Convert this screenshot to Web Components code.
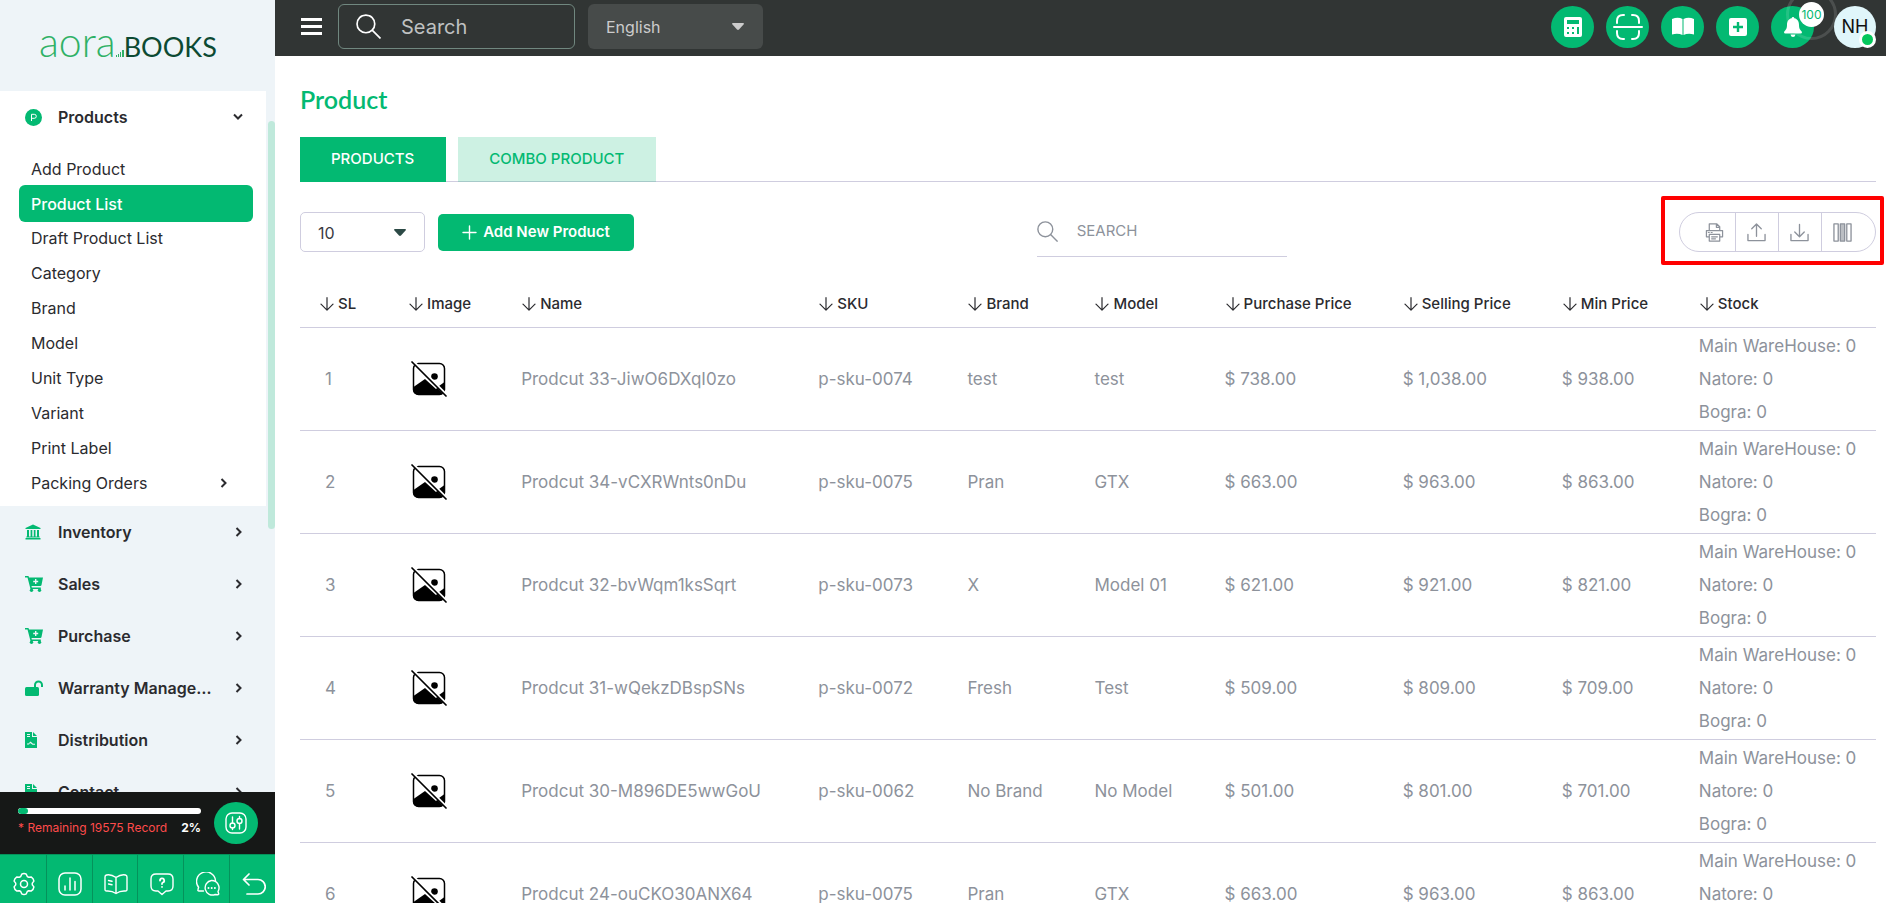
<!DOCTYPE html>
<html lang="en">
<head>
<meta charset="utf-8">
<meta name="viewport" content="width=device-width, initial-scale=1">
<title>Aorabooks - Product</title>
<style>
  html, body { margin: 0; height: 100%; }
  body { font: 16px/24px Inter, "Liberation Sans", sans-serif; color: #2b2b2f; background: #fff;
    --green: #03b972; --line: #cfcddf; --muted: #8d929b; --dark: #313534; }
</style>
</head>
<body>
<app-shell></app-shell>
<script>
const RESET = `*{box-sizing:border-box} button,input,select{font:inherit;color:inherit;margin:0;padding:0;border:0;background:none;border-radius:0;outline:0} button{cursor:pointer} a{color:inherit;text-decoration:none}`;

function define(name, css, html) {
  customElements.define(name, class extends HTMLElement {
    constructor() {
      super();
      const root = this.attachShadow({ mode: 'open' });
      const body = typeof html === 'function' ? html(this) : html;
      root.innerHTML = `<style>${RESET}${css}</style>${body}`;
    }
  });
}

/* Icon paths: [viewBox, markup] */
const S = 'fill="none" stroke="currentColor" stroke-linecap="round" stroke-linejoin="round"';
const ICONS = {
  search: ['0 0 24 24', `<g fill="none" stroke="currentColor" stroke-width="1.6"><circle cx="9.5" cy="9.5" r="8.5"/><path d="M15.5 15.5l8 8"/></g>`],
  burger: ['0 0 21 17', `<path fill="currentColor" d="M0 0h21v3H0zM0 7h21v3H0zM0 14h21v3H0z"/>`],
  caret: ['0 0 12 7', `<path fill="currentColor" d="M0 1q0-1 1-1h10q1 0 1 1L7 6.500Q6 7.300 5 6.500z"/>`],
  chev: ['0 0 10 10', `<path fill="none" stroke="currentColor" stroke-width="2" d="M2.500 1l4 4-4 4"/>`],
  calc: ['0 0 18 20', `<path fill="currentColor" fill-rule="evenodd" d="M2 0h14q2 0 2 2v16q0 2-2 2H2q-2 0-2-2V2q0-2 2-2zM3 3v4h12V3zM3 10v2h2v-2zM8 10v2h2v-2zM3 15v2h2v-2zM8 15v2h2v-2zM13 10v7h2v-7z"/>`],
  scan: ['0 0 30 26', `<g ${S} stroke-width="2"><path d="M4 9V7q0-6 6-6h1M19 1h1q6 0 6 6v2M4 17v2q0 6 6 6h1M19 25h1q6 0 6-6v-2M1 13h28"/></g>`],
  book: ['0 0 24 20', `<path fill="currentColor" d="M1 2q6-2.500 10.500 0v16Q7 16 1 17.500zM12.500 2q5-2.500 10.500 0v15.500q-6-1.500-10.500.500z"/>`],
  plusbox: ['0 0 18 18', `<path fill="currentColor" fill-rule="evenodd" d="M2 0h14q2 0 2 2v14q0 2-2 2H2q-2 0-2-2V2q0-2 2-2zM7.800 4v3.800H4v2.400h3.800V14h2.400v-3.800H14V7.800h-3.800V4z"/>`],
  bell: ['0 0 18 20', `<path fill="currentColor" d="M9 0q1.300 0 1.300 1.300C14 2 15 5 15 8c0 4 1.500 5 2.700 6.500q.8 2-1 2H1.300q-1.800 0-1-2C1.500 13 3 12 3 8c0-3 1-6 4.700-6.700Q7.700 0 9 0zM6.500 17.500h5q-.5 2.500-2.500 2.500t-2.500-2.500z"/>`],
  plus: ['0 0 15 15', `<path ${S} stroke-width="1.400" d="M7.500 1v13M1 7.500h13"/>`],
  arrow: ['0 0 14 14', `<path ${S} stroke-width="1.200" d="M7 .7v12.300M1 7.200l6 6 6-6"/>`],
  print: ['0 0 20 20', `<g ${S} stroke-width="1.300"><path d="M4.500 8V1h8l3 3v4M12 1v3.500h3.500M4 14.500H1.500V8h17v6.500H16M4.500 12h11v7h-11zM7 14.500h6M7 16.700h4M3.500 10h1M6.500 10h1"/></g>`],
  upload: ['0 0 20 20', `<g ${S} stroke-width="1.400"><path d="M10 14V1.500M5 6l5-5 5 5M1 12v6.500h18V12"/></g>`],
  download: ['0 0 20 20', `<g ${S} stroke-width="1.400"><path d="M10 1.500V14M5 9.500l5 5 5-5M1 12v6.500h18V12"/></g>`],
  columns: ['0 0 20 20', `<g ${S} stroke-width="1.400"><path d="M1 1h4.500v18H1zM14.500 1H19v18h-4.500z"/><path fill="currentColor" fill-opacity=".6" d="M7.700 1h4.600v18H7.700z"/></g>`],
  noimage: ['0 0 36 36', `<rect x="2.500" y="2.500" width="31" height="31" rx="5" fill="none" stroke="#000" stroke-width="1.500"/><circle cx="23.500" cy="15.500" r="3.300"/><path d="M2.500 26l11.500-8 11 10 3-3 5.500-4v8q0 4.500-4.500 4.500H7.500q-5 0-5-4.500z"/><path d="M2.500 1L35 33.500" stroke="#fff" stroke-width="3"/><path d="M1 1l34 34" stroke="#000" stroke-width="1.700" stroke-linecap="round"/>`],
  pcircle: ['0 0 17 17', `<circle cx="8.500" cy="8.500" r="8.500" fill="currentColor"/><path d="M6.500 12V5.300h2.800a2 2 0 010 4H6.500" fill="none" stroke="#fff"/>`],
  bank: ['0 0 16 16', `<path fill="currentColor" d="M8 .5L15.500 4v1H.5V4zM2 6h2v6.500H2zM5.600 6h1.700v6.500H5.600zM8.800 6h1.700v6.500H8.800zM12 6h2v6.500h-2zM1.300 12.500h13.400v1H1.300zM.5 14h15v1.500H.5z"/>`],
  cart: ['0 0 18 16', `<path fill="currentColor" fill-rule="evenodd" d="M0 0h3.500l.5 1.500h14L16.500 9q-.2 1-1.200 1H6.500l.3 1.500h9V13H5.500L2.500 1.500H0zM10 3v1.800H8.200v1.400H10V8h1.400V6.200h1.800V4.800h-1.800V3z"/><circle cx="6.500" cy="14.300" r="1.700" fill="currentColor"/><circle cx="14.500" cy="14.300" r="1.700" fill="currentColor"/>`],
  unlock: ['0 0 18 16', `<rect x="0" y="7" width="14" height="9" rx="1.500" fill="currentColor"/><path d="M10 7V5a3.500 3.500 0 017 0v2" fill="none" stroke="currentColor" stroke-width="2"/>`],
  file: ['0 0 12 16', `<path fill="currentColor" fill-rule="evenodd" d="M0 0h7v5h5v11H0zM8 0l4 4H8zM2 2v1h3V2zM2 4v1h3V4zM2 12.500h2l1-1.500 1.500 1 1 .8H10v-1H8L5.500 9.500 3.500 11.500H2z"/>`],
  gear: ['0 0 24 24', `<g ${S} stroke-width="1.500"><circle cx="12" cy="12" r="3.500"/><path d="M9.700 2.200q2.300-1.400 4.600 0l1 2.300 1.500.8 2.600-.2q2.200 1.400 2.500 4l-1.600 2v1.800l1.600 2q-.3 2.600-2.500 4l-2.600-.2-1.500.8-1 2.300q-2.300 1.400-4.600 0l-1-2.300-1.500-.8-2.600.2q-2.200-1.400-2.500-4l1.600-2v-1.800l-1.600-2q.3-2.600 2.500-4l2.600.2 1.500-.8z"/></g>`],
  chart: ['0 0 24 24', `<g ${S} stroke-width="1.500"><rect x="1" y="1" width="22" height="22" rx="6"/><path d="M7 18v-4M12 18V6M17 18V9.500"/></g>`],
  reader: ['0 0 24 24', `<g ${S} stroke-width="1.400"><path d="M12 5.500Q7 2 2.500 3 1 3.300 1 5v12.500q0 1.700 2 1.500 5-.3 9 2.500 4-2.800 9-2.500 2 .2 2-1.500V5q0-1.700-1.500-2Q17 2 12 5.500zM12 5.500v16M4.500 8.500l3.500.8M4.500 12l3.500.8"/></g>`],
  help: ['0 0 24 24', `<g ${S} stroke-width="1.400"><path d="M6 2h12q5 0 5 5v7q0 5-5 5h-2l-4 3.500L8 19H6q-5 0-5-5V7q0-5 5-5z"/><path stroke-width="1.800" d="M10 8.500a2.100 2.100 0 112.700 2q-.7.400-.7 1.500M12 14.800v.1"/></g>`],
  chat: ['0 0 24 24', `<g ${S} stroke-width="1.400"><path d="M7.500 19H3q-1.500 0-1-1.500l.6-2.200A9.500 9.500 0 1119.500 8.500"/><path d="M15.500 8.500a7.300 7.300 0 016.500 11l.7 2.300q.1 1-1 1l-2.500-.3A7.300 7.300 0 1115.500 8.500z"/><path stroke-width="2" d="M12.500 16v.1M15.700 16v.1M18.900 16v.1"/></g>`],
  back: ['0 0 24 24', `<path ${S} stroke-width="1.700" d="M7 2L1.500 7.500 7 13M1.500 7.500H16a7.200 7.200 0 010 14.500H5"/>`],
  sliders: ['0 0 22 22', `<g ${S} stroke-width="1.400"><rect x="1" y="1" width="20" height="20" rx="6"/><path d="M7.500 5v6M7.500 16v1.500M14.500 4.500v2M14.500 11.500V17"/><circle cx="7.500" cy="13.500" r="2.500"/><circle cx="14.500" cy="9" r="2.500"/></g>`]
};
define('ab-icon', `:host{display:inline-flex;flex:none;width:var(--w,24px);height:var(--h,var(--w,24px))} svg{display:block;width:100%;height:100%}`,
  el => { const [vb, g] = ICONS[el.getAttribute('name')]; return `<svg viewBox="${vb}" aria-hidden="true">${g}</svg>`; });

/* ---------- Sidebar ---------- */
define('brand-logo', `
  :host{display:block;height:91px}
  a{display:flex;align-items:baseline;padding:22px 0 0 39px;font-family:Lato,sans-serif;font-weight:300;line-height:40px}
  .a{font-size:41px;color:#2fb166}
  .b{font-size:27px;color:#0c4a33;font-weight:400}
  svg{width:8px;height:7px}`,
  `<a href="#" aria-label="Aorabooks"><span class="a">aora</span><svg viewBox="0 0 8 7"><path fill="#2fb166" d="M0 5h1v2H0zM2 4h1v3H2zM4 2h1v5H4zM6 0h2v7H6z"/></svg><span class="b">BOOKS</span></a>`);

define('nav-item', `
  :host{display:block}
  a{display:flex;align-items:center;height:52px;padding:0 31px 0 25px;font-weight:600}
  .ic{flex:none;width:33px;display:flex;color:var(--green)}
  .t{flex:1;min-width:0;overflow:hidden;text-overflow:ellipsis;white-space:nowrap;margin-right:18px}
  .c{--w:10px}
  :host([open]){background:#fff;margin-right:9px;padding-bottom:6px}
  :host([open]) a{padding-right:23px}
  :host([open]) .c{transform:rotate(90deg)}
  .sub{display:none} :host([open]) .sub{display:block;padding-top:8px}`,
  `<a href="#"><span class="ic"><slot name="icon"></slot></span><span class="t"><slot name="label"></slot></span><ab-icon class="c" name="chev"></ab-icon></a><div class="sub"><slot></slot></div>`);

define('nav-link', `
  :host{display:block;height:35px;padding:0 13px 0 19px}
  a{display:flex;align-items:center;justify-content:space-between;height:35px;padding:0 24px 0 12px;border-radius:6px}
  :host([active]) a{background:var(--green);color:#fff;font-weight:500;height:37px;margin:-1px 0}
  .c{--w:10px;display:none} :host([more]) .c{display:flex}`,
  `<a href="#"><slot></slot><ab-icon class="c" name="chev"></ab-icon></a>`);

define('usage-panel', `
  :host{display:flex;align-items:center;height:62px;padding:0 17px 0 18px;background:#161817;gap:13px}
  .u{flex:1}
  .bar{height:6px;border-radius:3px;background:#fff;overflow:hidden}
  .bar i{display:block;height:6px;width:10px;background:var(--green);border-radius:3px}
  p{display:flex;justify-content:space-between;margin:4px 0 0;font-size:12px;line-height:20px;color:#ff4b4b;white-space:nowrap}
  b{color:#fff}
  button{width:44px;height:42px;border-radius:50%;background:var(--green);color:#fff;display:grid;place-items:center;--w:22px}`,
  `<div class="u"><div class="bar"><i></i></div><p><span>* Remaining 19575 Record</span><b>2%</b></p></div><button aria-label="Preferences"><ab-icon name="sliders"></ab-icon></button>`);

define('quick-bar', `
  :host{display:grid;grid-template-columns:repeat(6,1fr);height:49px;background:var(--green);border-top:1px solid #05925b;color:#fff;overflow:hidden}
  button{display:grid;place-items:center;padding:9px 0 0 2px;--w:24px}
  button+button{border-left:1px solid #05925b}`,
  [['gear','Settings'],['chart','Reports'],['reader','Guide'],['help','Help'],['chat','Chat'],['back','Back']].map(([i,l]) => `<button aria-label="${l}"><ab-icon name="${i}"></ab-icon></button>`).join(''));

const SUB = ['Add Product','Product List','Draft Product List','Category','Brand','Model','Unit Type','Variant','Print Label','Packing Orders'];
const NAV = [['bank','16px','16px','Inventory'],['cart','18px','16px','Sales'],['cart','18px','16px','Purchase'],['unlock','18px','16px','Warranty Management'],['file','12px','16px','Distribution'],['file','12px','16px','Contact']];
define('side-bar', `
  :host{display:flex;flex-direction:column;height:100vh;background:#eef4f8;color:#2b2b2f}
  .menu{position:relative;flex:1;min-height:0;overflow:hidden}
  .thumb{position:absolute;right:0;top:30px;width:7px;height:408px;border-radius:4px;background:#bfe9db}`,
  `<brand-logo></brand-logo>
  <nav class="menu">
    <nav-item open><ab-icon slot="icon" name="pcircle" style="--w:17px"></ab-icon><span slot="label">Products</span>
      ${SUB.map((s,i) => `<nav-link${i===1?' active':''}${i===9?' more':''}>${s}</nav-link>`).join('')}
    </nav-item>
    ${NAV.map(([i,w,h,t]) => `<nav-item><ab-icon slot="icon" name="${i}" style="--w:${w};--h:${h}"></ab-icon><span slot="label">${t}</span></nav-item>`).join('')}
    <span class="thumb"></span>
  </nav>
  <usage-panel></usage-panel><quick-bar></quick-bar>`);

/* ---------- Top bar ---------- */
define('round-button', `
  :host{display:block;position:relative}
  button{display:grid;place-items:center;width:43px;height:42px;border-radius:50%;background:var(--green);color:#fff}`,
  el => `<button aria-label="${el.getAttribute('label')}"><slot></slot></button><slot name="badge"></slot>`);

define('user-avatar', `
  :host{display:block;position:relative;margin-left:8px}
  button{width:42px;height:42px;border-radius:50%;background:#e0f6fa;color:#111;font-size:18px;line-height:42px}
  i{position:absolute;right:0;bottom:0;width:17px;height:17px;border:3px solid #fff;border-radius:50%;background:#05c75c}`,
  `<button aria-label="Account"><slot></slot></button><i></i>`);

define('top-bar', `
  :host{display:flex;align-items:center;height:56px;padding:0 10px 3px 26px;background:var(--dark);color:#fff;overflow:hidden}
  .burger{display:flex;--w:21px;--h:17px;margin-right:16px}
  .find{display:flex;align-items:center;width:237px;height:45px;border:1px solid #70877f;border-radius:6px;padding-left:17px;gap:20px;--w:25px}
  .find input{width:140px;font-size:20px}
  .find input::placeholder{color:#bfc1c1;opacity:1}
  .lang{position:relative;display:flex;align-items:center;width:175px;height:45px;margin-left:13px;border-radius:6px;background:#474b4a;color:#ccc;--w:12px;--h:7px}
  .lang select{appearance:none;width:100%;height:45px;padding:0 40px 0 18px}
  .lang ab-icon{position:absolute;right:19px;pointer-events:none}
  .acts{display:flex;gap:12px;margin-left:auto}
  .badge{position:absolute;left:28px;top:-4px;width:25px;height:25px;border-radius:50%;background:#fff;color:var(--green);font-size:12px;line-height:25px;text-align:center}
  .badge::after{content:"";position:absolute;inset:-13px;border:3px solid rgba(255,255,255,.13);border-radius:50%}`,
  `<button class="burger" aria-label="Menu"><ab-icon name="burger"></ab-icon></button>
  <label class="find"><ab-icon name="search"></ab-icon><input type="search" placeholder="Search" aria-label="Search"></label>
  <label class="lang"><select aria-label="Language"><option>English</option></select><ab-icon name="caret"></ab-icon></label>
  <div class="acts">
    <round-button label="Calculator"><ab-icon name="calc" style="--w:18px;--h:20px"></ab-icon></round-button>
    <round-button label="Scan"><ab-icon name="scan" style="--w:30px;--h:26px"></ab-icon></round-button>
    <round-button label="Guide"><ab-icon name="book" style="--w:24px;--h:20px"></ab-icon></round-button>
    <round-button label="Create"><ab-icon name="plusbox" style="--w:18px"></ab-icon></round-button>
    <round-button label="Notifications"><ab-icon name="bell" style="--w:18px;--h:20px"></ab-icon><span slot="badge" class="badge">100</span></round-button>
    <user-avatar>NH</user-avatar>
  </div>`);

/* ---------- Page body ---------- */
define('tab-bar', `
  :host{display:flex;gap:12px;border-bottom:1px solid var(--line);font-size:15px;font-weight:500}
  button{height:45px;padding:0 32px 2px 31px;margin-bottom:-1px;background:rgba(3,185,114,.2);color:var(--green)}
  button[aria-selected=true]{background:var(--green);color:#fff}`,
  `<button role="tab" aria-selected="true">PRODUCTS</button><button role="tab" aria-selected="false">COMBO PRODUCT</button>`);

define('tool-bar', `
  :host{display:grid;grid-template-columns:5fr 250px 4fr;align-items:start;height:46px}
  .l{display:flex;align-items:center;gap:13px}
  .size{position:relative;display:flex;align-items:center;width:125px;height:40px;border:1px solid var(--line);border-radius:5px;color:#3a3a3f;--w:12px;--h:7px}
  .size select{appearance:none;width:100%;height:38px;padding:2px 18px 0 17px}
  .size ab-icon{position:absolute;right:18px;color:#2c4a46;pointer-events:none}
  .add{display:flex;align-items:center;justify-content:center;gap:6px;width:196px;height:37px;border-radius:5px;background:var(--green);color:#fff;font-size:15px;font-weight:600;--w:15px}
  .find{display:flex;align-items:center;height:45px;padding-bottom:6px;gap:19px;border-bottom:1px solid var(--line);color:var(--muted);--w:21px}
  .find input{width:180px;height:24px;font-size:15px}
  .find input::placeholder{color:var(--muted);opacity:1}
  .r{position:relative;justify-self:end;display:flex;height:40px;border:1px solid var(--line);border-radius:20px;color:#8d929b}
  .r button{width:43px;display:grid;place-items:center;--w:19px}
  .r button+button{border-left:1px solid var(--line)}
  .r button:first-of-type{width:55px;padding-left:14px}
  .r button:last-of-type{width:54px;padding-right:12px}
  .mark{position:absolute;inset:-17px -9px -14px -19px;border:4px solid #f00;border-radius:2px;pointer-events:none}`,
  `<div class="l"><label class="size"><select aria-label="Rows per page"><option>10</option></select><ab-icon name="caret"></ab-icon></label>
    <button class="add"><ab-icon name="plus"></ab-icon>Add New Product</button></div>
  <label class="find"><ab-icon name="search"></ab-icon><input type="search" placeholder="SEARCH" aria-label="Search products"></label>
  <div class="r">${[['print','Print'],['upload','Import'],['download','Export'],['columns','Columns']].map(([i,l]) => `<button aria-label="${l}"><ab-icon name="${i}"></ab-icon></button>`).join('')}<span class="mark"></span></div>`);

const COLS = [['SL',108],['Image',113],['Name',297],['SKU',149],['Brand',127],['Model',130],['Purchase Price',178],['Selling Price',159],['Min Price',137],['Stock',177]];
const ROWS = [
  ['1','33-JiwO6DXqI0zo','0074','test','test','738','1,038','938'],
  ['2','34-vCXRWnts0nDu','0075','Pran','GTX','663','963','863'],
  ['3','32-bvWqm1ksSqrt','0073','X','Model 01','621','921','821'],
  ['4','31-wQekzDBspSNs','0072','Fresh','Test','509','809','709'],
  ['5','30-M896DE5wwGoU','0062','No Brand','No Model','501','801','701'],
  ['6','24-ouCKO30ANX64','0075','Pran','GTX','663','963','863']
];
define('product-table', `
  :host{display:block}
  table{width:100%;table-layout:fixed;border-collapse:separate;border-spacing:0;text-align:left}
  th{height:48px;padding:0 0 0 1px;font-size:15px;font-weight:500;color:#2b2b2f;border-bottom:1px solid var(--line);white-space:nowrap}
  th span{display:flex;align-items:center;gap:4px;--w:14px}
  td{height:103px;padding:0;font-size:17px;line-height:33px;color:var(--muted);border-bottom:1px solid var(--line);white-space:nowrap}
  th:first-child{padding-left:20px} td:first-child{padding-left:25px}
  .im{padding-left:3px;--w:36px} .im ab-icon{display:flex}`,
  `<table><colgroup>${COLS.map(c => `<col style="width:${c[1]}px">`).join('')}</colgroup>
  <thead><tr>${COLS.map(c => `<th scope="col"><span><ab-icon name="arrow"></ab-icon>${c[0]}</span></th>`).join('')}</tr></thead>
  <tbody>${ROWS.map(r => `<tr><td>${r[0]}</td><td class="im"><ab-icon name="noimage"></ab-icon></td><td>Prodcut ${r[1]}</td><td>p-sku-${r[2]}</td><td>${r[3]}</td><td>${r[4]}</td><td>$ ${r[5]}.00</td><td>$ ${r[6]}.00</td><td>$ ${r[7]}.00</td><td>Main WareHouse: 0<br>Natore: 0<br>Bogra: 0</td></tr>`).join('')}</tbody></table>`);

define('product-page', `
  :host{display:block;padding:27px 10px 0 25px}
  h1{margin:0 0 22px;font:600 25px/32px Lato,sans-serif;color:var(--green)}
  tool-bar{margin:30px 0 22px}`,
  `<h1>Product</h1><tab-bar role="tablist"></tab-bar><tool-bar></tool-bar><product-table></product-table>`);

define('app-shell', `
  :host{display:grid;grid-template-columns:275px minmax(0,1fr);height:100vh;overflow:hidden}
  main{min-width:0;overflow:hidden}`,
  `<side-bar></side-bar><main><top-bar></top-bar><product-page></product-page></main>`);
</script>
</body>
</html>
